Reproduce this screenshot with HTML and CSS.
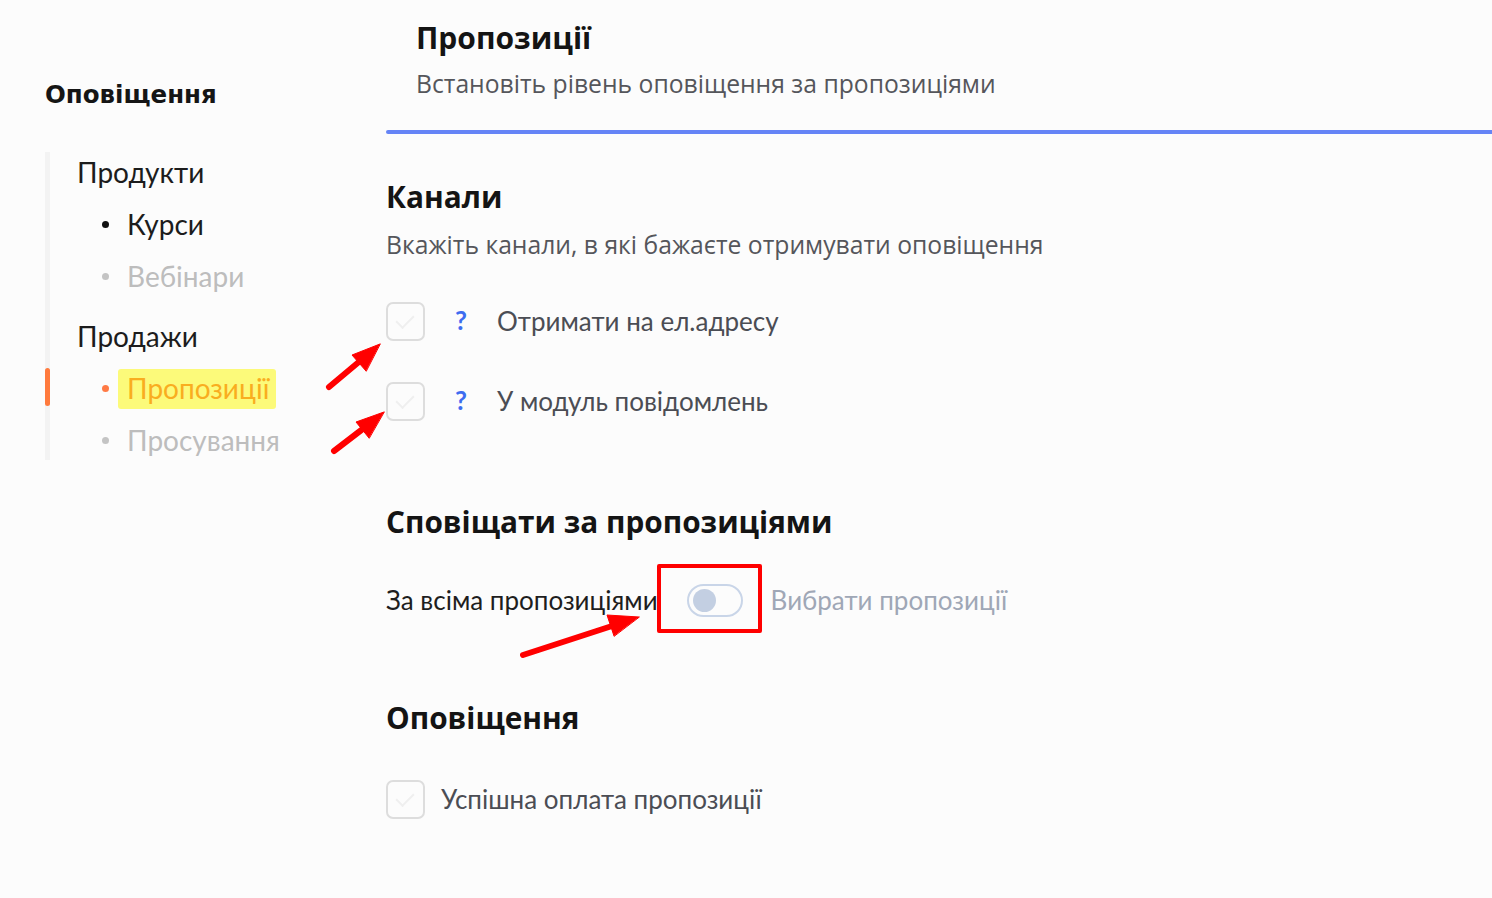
FILE: index.html
```html
<!DOCTYPE html>
<html lang="uk">
<head>
    <meta charset="UTF-8">
    <meta name="viewport" content="width=device-width, initial-scale=1.0">
    <title>Оповіщення</title>
    <link rel="stylesheet" href="styles.css">
</head>
<body>
    <div class="page">
        <aside class="sidebar">
            <h2 class="sidebar_title">Оповіщення</h2>
            <ul class="menu">
                <li class="menu_group">Продукти</li>
                <li class="menu_item">Курси</li>
                <li class="menu_item muted">Вебінари</li>
                <li class="menu_group second">Продажи</li>
                <li class="menu_item active"><span class="mark">Пропозиції</span></li>
                <li class="menu_item muted">Просування</li>
            </ul>
        </aside>

        <main class="content">
            <header class="top">
                <h1>Пропозиції</h1>
                <p class="lead">Встановіть рівень оповіщення за пропозиціями</p>
            </header>
            <div class="divider"></div>

            <section class="block channels">
                <h2>Канали</h2>
                <p class="lead">Вкажіть канали, в які бажаєте отримувати оповіщення</p>
                <label class="check_row">
                    <span class="box"></span>
                    <span class="help">?</span>
                    <span class="label_text">Отримати на ел.адресу</span>
                </label>
                <label class="check_row">
                    <span class="box"></span>
                    <span class="help">?</span>
                    <span class="label_text">У модуль повідомлень</span>
                </label>
            </section>

            <section class="block">
                <h2>Сповіщати за пропозиціями</h2>
                <div class="switch_row">
                    <span class="switch_label">За всіма пропозиціями</span>
                    <span class="switch_wrap">
                        <span class="switch"><span class="knob"></span></span>
                        <span class="red_box"></span>
                    </span>
                    <span class="switch_other">Вибрати пропозиції</span>
                </div>
            </section>

            <section class="block">
                <h2>Оповіщення</h2>
                <label class="check_row plain">
                    <span class="box"></span>
                    <span class="label_text">Успішна оплата пропозиції</span>
                </label>
            </section>
        </main>
    </div>

    <svg class="arrows" width="1492" height="898" viewBox="0 0 1492 898">
        <g stroke="#ff0000" stroke-width="6" stroke-linecap="round" fill="#ff0000">
            <line x1="329" y1="387" x2="360" y2="361"/>
            <polygon points="380,344 352,355 366,371" stroke-width="1"/>
            <line x1="334" y1="451" x2="364" y2="428"/>
            <polygon points="384,412 356,422 369,438" stroke-width="1"/>
            <line x1="523" y1="655" x2="612" y2="626"/>
            <polygon points="639,617 607,615 614,636" stroke-width="1"/>
        </g>
    </svg>
</body>
</html>
```

FILE: styles.css
```css
body {
    margin: 0;
    background: #fcfcfc;
    font-family: "Lato", "Noto Sans", sans-serif;
    color: #1c1c1c;
}
.page {
    display: flex;
}

/* menu on the left */
.sidebar {
    width: 342px;
    padding: 80px 0 0 44px;
}
.sidebar_title {
    margin: 0 0 42px 1px;
    font-family: "DejaVu Sans", sans-serif;
    font-size: 24.5px;
    line-height: 30px;
    font-weight: bold;
    color: #151515;
}
.menu {
    list-style: none;
    margin: 0 0 0 1px;
    padding: 0 0 0 27px;
    border-left: 5px solid #f3f3f3;
    height: 308px;
}
.menu li {
    position: relative;
    font-size: 28px;
    line-height: 40px;
    margin-top: 12px;
}
.menu .menu_group {
    margin-top: 0;
}
.menu .menu_group.second {
    margin-top: 20px;
}
.menu_item {
    padding-left: 50px;
}
.menu_item::before {
    content: "";
    position: absolute;
    left: 25px;
    top: 17px;
    width: 7px;
    height: 7px;
    border-radius: 50%;
    background: #111;
}
.menu_item.muted {
    color: #bdbdbd;
}
.menu_item.muted::before {
    background: #c4c4c4;
}
.menu_item.active::before {
    background: #ff7a45;
}
.menu_item.active::after {
    content: "";
    position: absolute;
    left: -32px;
    top: 0;
    width: 5px;
    height: 38px;
    border-radius: 3px;
    background: #ff7a3d;
}
.mark {
    margin-left: -9px;
    padding: 2px 6px 4px 9px;
    background: #fcfa7a;
    border-radius: 3px;
    color: #f9ad1f;
}

/* right side */
.content {
    flex: 1;
    padding-bottom: 60px;
}
.top {
    padding: 20px 0 0 30px;
}
h1 {
    margin: 0;
    font-family: "Open Sans", sans-serif;
    font-size: 30px;
    line-height: 36px;
    font-weight: bold;
    color: #141414;
}
.lead {
    margin: 12px 0 0 0;
    font-family: "Open Sans", sans-serif;
    font-size: 24.7px;
    line-height: 32px;
    color: #55565b;
}
.divider {
    margin-top: 30px;
    height: 4px;
    background: #6584f6;
    border-radius: 2px 0 0 2px;
}
.block h2 {
    margin: 0;
    font-family: "Open Sans", sans-serif;
    font-size: 29.8px;
    line-height: 36px;
    font-weight: bold;
    color: #141414;
}
.channels .lead {
    margin-top: 14px;
}
.block {
    padding-top: 83px;
}
.block.channels {
    padding-top: 45px;
}
.check_row {
    display: flex;
    align-items: center;
    margin-top: 40px;
    height: 40px;
}
.block h2 + .check_row {
    margin-top: 43px;
}
.box {
    position: relative;
    box-sizing: border-box;
    width: 39px;
    height: 39px;
    border: 2px solid #dddddd;
    border-radius: 7px;
    background: #fcfcfc;
}
.box::after {
    content: "";
    position: absolute;
    left: 12px;
    top: 7px;
    width: 8px;
    height: 15px;
    border: solid #efefef;
    border-width: 0 2px 2px 0;
    transform: rotate(45deg);
}
.help {
    width: 72px;
    text-align: center;
    font-size: 26px;
    font-weight: bold;
    color: #3d6cf0;
    margin-bottom: 3px;
}
.label_text {
    font-size: 26px;
    color: #4b4d54;
}
.plain .box {
    margin-right: 16px;
}

.switch_row {
    display: flex;
    align-items: center;
    margin-top: 43px;
    height: 34px;
}
.switch_label {
    font-size: 26px;
    color: #1e1e1e;
}
.switch_wrap {
    position: relative;
    margin: 0 28px 0 29px;
}
.switch {
    display: flex;
    align-items: center;
    box-sizing: border-box;
    width: 56px;
    height: 33px;
    padding-left: 4px;
    border: 2px solid #c9d5e8;
    border-radius: 17px;
}
.knob {
    width: 23px;
    height: 23px;
    border-radius: 50%;
    background: #c3cfe2;
}
.red_box {
    position: absolute;
    left: -30px;
    top: -20px;
    width: 97px;
    height: 61px;
    border: 4px solid #f00;
    border-radius: 2px;
}
.switch_other {
    font-size: 26px;
    color: #9fa7b6;
}

.arrows {
    position: absolute;
    left: 0;
    top: 0;
    pointer-events: none;
}
```
